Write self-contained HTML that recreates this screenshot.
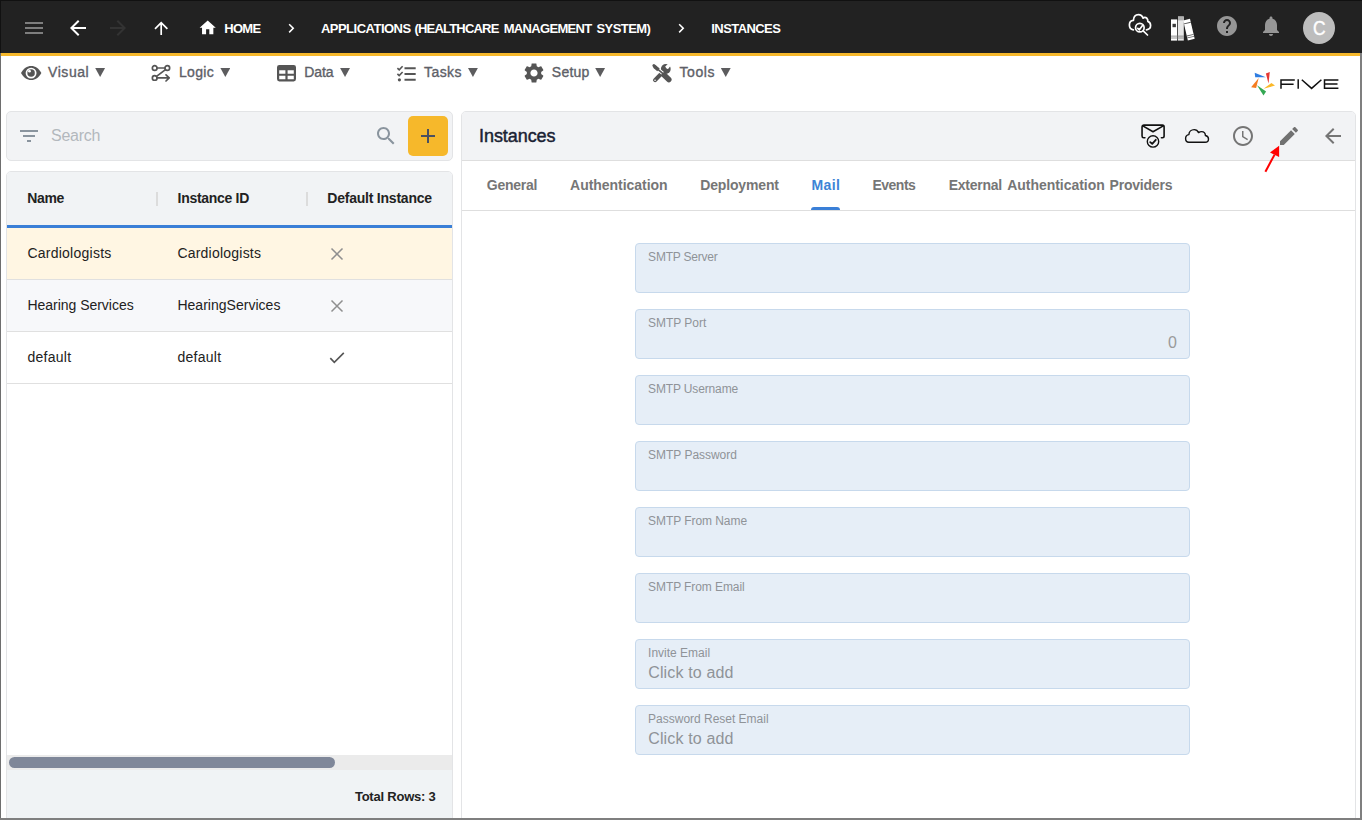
<!DOCTYPE html>
<html lang="en">
<head>
<meta charset="utf-8">
<title>Instances - Five</title>
<style>
html,body{margin:0;padding:0;}
body{width:1362px;height:820px;overflow:hidden;background:#fff;position:relative;font-family:"Liberation Sans",sans-serif;}
.a{position:absolute;box-sizing:border-box;}
.t{position:absolute;white-space:nowrap;line-height:1;font-family:"Liberation Sans",sans-serif;}
svg{position:absolute;overflow:visible;}
.tri{position:absolute;top:68.100px;width:9.900px;height:8.800px;background:#5c5c5e;clip-path:polygon(0 0,100% 0,50% 100%);}
.field{position:absolute;box-sizing:border-box;left:635px;width:555px;height:50px;background:#e6eef7;border:1px solid #c7d9ec;border-radius:4px;}
.sep{position:absolute;width:2px;height:14px;top:192px;background:#dcdcdc;}
.rowline{position:absolute;left:7px;width:445px;height:1px;background:#e0e0e0;}
</style>
</head>
<body>

<!-- ===== top app bar ===== -->
<div class="a" style="left:0;top:0;width:1362px;height:53px;background:#222222;"></div>
<div class="a" style="left:0;top:53px;width:1362px;height:3px;background:#f6b82b;"></div>

<!-- hamburger -->
<svg style="left:22px;top:16px" width="24" height="24" viewBox="0 0 24 24"><path fill="#7e7e7e" d="M3 18h18v-2H3v2zm0-5h18v-2H3v2zm0-7v2h18V6H3z"/></svg>
<!-- back -->
<svg style="left:66px;top:16px" width="24" height="24" viewBox="0 0 24 24"><path fill="#ffffff" d="M20 11H7.83l5.59-5.59L12 4l-8 8 8 8 1.41-1.41L7.83 13H20v-2z"/></svg>
<!-- forward (disabled) -->
<svg style="left:106px;top:16px" width="24" height="24" viewBox="0 0 24 24"><path fill="#333333" d="M12 4l-1.41 1.41L16.17 11H4v2h12.170l-5.580 5.590L12 20l8-8z"/></svg>
<!-- up -->
<svg style="left:150.800px;top:18.100px" width="20.400" height="20.400" viewBox="0 0 24 24"><path fill="#ffffff" d="M4 12l1.410 1.410L11 7.830V20h2V7.830l5.580 5.590L20 12l-8-8-8 8z"/></svg>
<!-- home -->
<svg style="left:198.300px;top:18.200px" width="19.400" height="19.400" viewBox="0 0 24 24"><path fill="#ffffff" d="M10 20v-6h4v6h5v-8h3L12 3 2 12h3v8z"/></svg>
<!-- chevrons -->
<svg style="left:281.600px;top:19.150px" width="18.500" height="18.500" viewBox="0 0 24 24"><path fill="#ffffff" d="M10 6L8.590 7.410 13.170 12l-4.580 4.590L10 18l6-6z"/></svg>
<svg style="left:671.600px;top:19.150px" width="18.500" height="18.500" viewBox="0 0 24 24"><path fill="#ffffff" d="M10 6L8.590 7.410 13.170 12l-4.580 4.590L10 18l6-6z"/></svg>

<!-- cloud search icon -->
<svg style="left:1128px;top:13px" width="26" height="24" viewBox="0 0 26 24" fill="none" stroke="#ffffff" stroke-width="1.700" stroke-linecap="round" stroke-linejoin="round">
<path d="M5.400 16.850C3 16.500 1.400 14.500 1.400 12C1.400 9.300 3.200 7.600 5.400 7.400C5.600 4 7.500 1.700 10.400 1.700C12.600 1.700 14.300 3 15.100 5.200C16 4.200 17.600 4.100 18.600 5C19.600 5.900 20 7.200 19.800 8.400C21.600 9 22.600 10.700 22.600 12.500C22.600 14.800 21 16.500 18.500 16.850"/>
<circle cx="11.850" cy="14.660" r="4.300"/>
<path d="M15.200 17.900l4.300 4.100"/>
<path d="M9.800 15.300l1.550 1.550 3.150-4.250" stroke-width="1.700"/>
</svg>

<!-- books icon -->
<svg style="left:1171px;top:15.500px" width="25" height="25" viewBox="0 0 25 25">
<rect x="0" y="3.400" width="6.200" height="21.200" fill="#ffffff"/>
<rect x="7" y="0.500" width="5.800" height="24.100" fill="#e6e6e6"/>
<rect x="7" y="0.500" width="5.800" height="3.900" fill="#b0b0b0"/>
<g transform="rotate(-13.200 17.900 14)"><rect x="14.500" y="3.400" width="7" height="20.500" fill="#ffffff"/>
<rect x="14.500" y="6.400" width="7" height="1" fill="#555"/><rect x="14.500" y="18.900" width="7" height="0.900" fill="#666"/><rect x="14.500" y="20.900" width="7" height="0.800" fill="#666"/></g>
<rect x="1.500" y="7.800" width="3.400" height="3.400" fill="#3a3a3a"/>
<rect x="0" y="19.700" width="12.800" height="0.800" fill="#777"/>
<rect x="0" y="21.600" width="12.800" height="0.800" fill="#777"/>
</svg>

<!-- help -->
<svg style="left:1215px;top:13.700px" width="24" height="24" viewBox="0 0 24 24"><path fill="#969696" d="M12 2C6.480 2 2 6.480 2 12s4.480 10 10 10 10-4.480 10-10S17.520 2 12 2zm1 17h-2v-2h2v2zm2.070-7.750l-.9.920C13.450 12.900 13 13.500 13 15h-2v-.5c0-1.100.450-2.100 1.170-2.830l1.240-1.260c.370-.360.590-.860.590-1.410 0-1.100-.9-2-2-2s-2 .9-2 2H8c0-2.210 1.790-4 4-4s4 1.790 4 4c0 .880-.360 1.680-.930 2.250z"/></svg>
<!-- bell -->
<svg style="left:1259px;top:13.800px" width="24" height="24" viewBox="0 0 24 24"><path fill="#969696" d="M12 22c1.100 0 2-.9 2-2h-4c0 1.100.890 2 2 2zm6-6v-5c0-3.070-1.640-5.640-4.500-6.320V4c0-.830-.670-1.500-1.500-1.500s-1.500.670-1.500 1.500v.680C7.630 5.360 6 7.920 6 11v5l-2 2v1h16v-1l-2-2z"/></svg>
<!-- avatar -->
<div class="a" style="left:1303px;top:12px;width:32px;height:32px;border-radius:50%;background:#bdbdbd;"></div>

<!-- ===== menu bar icons ===== -->
<!-- eye -->
<svg style="left:20.800px;top:65.900px" width="20.400" height="14" viewBox="0 0 20.400 14"><path fill="#555555" d="M0 7C2.500 2.500 6 0 10.200 0C14.400 0 17.900 2.500 20.400 7C17.900 11.500 14.400 14 10.200 14C6 14 2.500 11.500 0 7Z"/><circle cx="10.100" cy="7.100" r="5.450" fill="#ffffff"/><circle cx="10.100" cy="7.100" r="3.750" fill="#555555"/><circle cx="8.500" cy="5.200" r="1.350" fill="#ffffff"/></svg>
<div class="tri" style="left:95.200px;"></div>

<!-- logic -->
<svg style="left:151px;top:64px" width="20" height="18" viewBox="0 0 20 18" fill="none" stroke="#555555" stroke-width="1.700" stroke-linecap="round" stroke-linejoin="round">
<circle cx="3.700" cy="4" r="2.350"/><circle cx="16.300" cy="4" r="2.350"/><circle cx="3.700" cy="13.900" r="2.350"/>
<path d="M6.100 4h7.800M14.500 5.600L5.500 12.400M6.100 13.900h12M15 10.800l3.200 3.100-3.200 3.100"/>
</svg>
<div class="tri" style="left:220.400px;"></div>

<!-- data -->
<svg style="left:277.400px;top:64.600px" width="19" height="16.400" viewBox="0 0 19 16.400"><path fill="#555555" fill-rule="evenodd" d="M2.300 0h14.400a2.300 2.300 0 0 1 2.300 2.300v11.800a2.300 2.300 0 0 1-2.300 2.300H2.300A2.300 2.300 0 0 1 0 14.100V2.300A2.300 2.300 0 0 1 2.300 0zM2.200 5.300v3.400h6.200V5.300zM10.600 5.300v3.400h6.200V5.300zM2.200 10.800v3.400h6.200v-3.400zM10.600 10.800v3.400h6.200v-3.400z"/></svg>
<div class="tri" style="left:340.100px;"></div>

<!-- tasks -->
<svg style="left:396.750px;top:65.650px" width="20" height="15.400" viewBox="0 0 20 15.400" fill="none" stroke="#555555" stroke-linecap="butt">
<path d="M7.500 2.200h11.200M7.500 7.950h11.200M7.500 13.800h11.200" stroke-width="1.900"/>
<path d="M0.400 2.100l1.800 1.700L5.600 0.300M0.400 7.850l1.800 1.700 3.400-3.500" stroke-width="1.600" stroke-linejoin="miter"/>
<circle cx="2.400" cy="13.800" r="1.600" fill="#555555" stroke="none"/>
</svg>
<div class="tri" style="left:468px;"></div>

<!-- gear -->
<svg style="left:522px;top:61px" width="24" height="24" viewBox="0 0 24 24"><path fill="#555555" d="M19.140 12.940c.040-.3.060-.610.060-.940 0-.320-.020-.640-.070-.940l2.030-1.580c.180-.140.230-.410.120-.610l-1.920-3.320c-.120-.220-.370-.290-.590-.220l-2.390.960c-.5-.380-1.030-.7-1.620-.940l-.360-2.540c-.040-.240-.240-.410-.480-.410h-3.840c-.240 0-.430.170-.470.410l-.360 2.540c-.590.240-1.130.570-1.620.940l-2.390-.960c-.220-.080-.470 0-.590.220L2.740 8.870c-.120.210-.080.470.12.610l2.030 1.580c-.050.3-.090.630-.090.940s.020.640.070.940l-2.030 1.580c-.180.140-.230.410-.120.610l1.920 3.320c.120.220.370.290.590.220l2.390-.960c.5.380 1.030.7 1.620.940l.360 2.540c.050.240.240.410.480.410h3.840c.240 0 .440-.170.470-.410l.360-2.540c.590-.240 1.130-.560 1.620-.940l2.390.960c.220.080.470 0 .590-.220l1.920-3.320c.120-.220.070-.470-.12-.610l-2.010-1.580zM12 15.600c-1.980 0-3.600-1.620-3.600-3.600s1.620-3.600 3.600-3.600 3.600 1.620 3.600 3.600-1.620 3.600-3.600 3.600z"/></svg>
<div class="tri" style="left:595.200px;"></div>

<!-- tools -->
<svg style="left:652px;top:63.500px" width="20" height="19" viewBox="0 0 20 19" fill="none" stroke="#555555" stroke-linecap="round">
<circle cx="13.800" cy="5" r="4.900" fill="#555555" stroke="none"/>
<path d="M14.300 3.900L19 -0.800" stroke="#ffffff" stroke-width="3.400" stroke-linecap="butt"/>
<circle cx="15.600" cy="3.100" r="1.700" fill="#ffffff" stroke="none"/>
<path d="M11.300 7.600L3.100 16.100" stroke-width="4.200"/>
<circle cx="3.050" cy="16.250" r="0.800" fill="#ffffff" stroke="none"/>
<path d="M6 5.400L11 9.600" stroke="#ffffff" stroke-width="3.600" stroke-linecap="butt"/>
<path d="M2.300 2.400L6.500 5.900" stroke-width="3.700" stroke-linecap="butt"/>
<path d="M1.900 1.600l1.600 1.600" stroke-width="3"/>
<path d="M6 5.400L11.200 9.800" stroke-width="1.600" stroke-linecap="butt"/>
<path d="M12.100 11.100L16.800 15.500" stroke-width="5.500"/>
</svg>
<div class="tri" style="left:720.800px;"></div>

<!-- FIVE logo -->
<svg style="left:1240px;top:60px" width="122" height="50" viewBox="0 0 122 50">
<polygon points="14.700,12.800 25.800,17.200 15.200,17.200" fill="#2f7de1"/>
<polygon points="29.800,12 25.900,13.600 28.500,23.600" fill="#e53935"/>
<polygon points="35,25.600 31.400,23 23.600,28.800" fill="#fbb829"/>
<polygon points="23.500,35.500 26.100,31.400 17,25.200" fill="#34a853"/>
<polygon points="11.100,27.300 16.100,27.900 18.700,17.900" fill="#f57c20"/>
<g fill="none" stroke="#111111" stroke-width="1.500" stroke-linecap="butt" stroke-linejoin="miter">
<path d="M41 28.800V19.900h13.800M41 24.200h12.600"/>
<path d="M58.200 19.300v9.500"/>
<path d="M61.800 19.800l9.800 8.600 9.800-8.600"/>
<path d="M98.400 19.900H84.500v8.300h13.900M84.500 24.100h13"/>
</g>
</svg>

<!-- ===== left panel ===== -->
<div class="a" style="left:6px;top:111px;width:447px;height:50px;background:#f2f3f5;border:1px solid #e3e4e6;border-radius:5px;"></div>
<svg style="left:17px;top:124px" width="24" height="24" viewBox="0 0 24 24"><path fill="#8a949e" d="M10 18h4v-2h-4v2zM3 6v2h18V6H3zm3 7h12v-2H6v2z"/></svg>
<svg style="left:374px;top:123.800px" width="24" height="24" viewBox="0 0 24 24"><path fill="#8a949e" d="M15.500 14h-.79l-.28-.27C15.410 12.590 16 11.110 16 9.500 16 5.910 13.090 3 9.500 3S3 5.910 3 9.500 5.910 16 9.500 16c1.610 0 3.090-.59 4.230-1.570l.27.280v.79l5 4.990L20.490 19l-4.990-5zm-6 0C7.010 14 5 11.990 5 9.500S7.010 5 9.500 5 14 7.010 14 9.500 11.990 14 9.500 14z"/></svg>
<div class="a" style="left:408px;top:116px;width:40px;height:40px;background:#f6b82b;border-radius:5px;"></div>
<div class="a" style="left:421px;top:135px;width:14px;height:2px;background:#4a5060;"></div>
<div class="a" style="left:427px;top:129px;width:2px;height:14px;background:#4a5060;"></div>

<!-- table -->
<div class="a" style="left:6px;top:171px;width:447px;height:660px;background:#ffffff;border:1px solid #e3e4e6;border-radius:5px 5px 0 0;"></div>
<div class="a" style="left:7px;top:172px;width:445px;height:53px;background:#f1f3f5;border-radius:4px 4px 0 0;"></div>
<div class="sep" style="left:156px;"></div>
<div class="sep" style="left:306px;"></div>
<div class="a" style="left:7px;top:225px;width:445px;height:3px;background:#3a7fd7;"></div>
<div class="a" style="left:7px;top:228px;width:445px;height:51px;background:#fff6e3;"></div>
<div class="rowline" style="top:279px;"></div>
<div class="a" style="left:7px;top:280px;width:445px;height:51px;background:#f7f8fa;"></div>
<div class="rowline" style="top:331px;"></div>
<div class="rowline" style="top:383px;"></div>
<!-- x / check icons -->
<svg style="left:331.400px;top:248.400px" width="12" height="12" viewBox="0 0 12 12" fill="none" stroke="#8f8f8f" stroke-width="1.500"><path d="M0.500 0.500l11 11M11.500 0.500l-11 11"/></svg>
<svg style="left:331.400px;top:300.400px" width="12" height="12" viewBox="0 0 12 12" fill="none" stroke="#8f8f8f" stroke-width="1.500"><path d="M0.500 0.500l11 11M11.500 0.500l-11 11"/></svg>
<svg style="left:329.200px;top:351px" width="16" height="13" viewBox="0 0 16 13" fill="none" stroke="#555555" stroke-width="1.650"><path d="M1.300 7.200l4 4.100L14.800 1.900"/></svg>
<!-- scrollbar + footer -->
<div class="a" style="left:7px;top:755px;width:445px;height:15px;background:#ebebeb;"></div>
<div class="a" style="left:9px;top:757px;width:326px;height:11px;background:#7f8799;border-radius:6px;"></div>
<div class="a" style="left:7px;top:770px;width:445px;height:48px;background:#f0f3f5;"></div>

<!-- ===== right panel ===== -->
<div class="a" style="left:461px;top:111px;width:895px;height:720px;background:#ffffff;border:1px solid #e3e4e6;border-radius:5px 5px 0 0;"></div>
<div class="a" style="left:462px;top:112px;width:893px;height:48px;background:#f2f3f5;border-radius:4px 4px 0 0;"></div>
<div class="a" style="left:462px;top:160px;width:893px;height:1px;background:#dedede;"></div>
<div class="a" style="left:462px;top:210px;width:893px;height:1px;background:#dedede;"></div>
<div class="a" style="left:811px;top:207px;width:29px;height:3px;background:#3a7fd7;border-radius:3px 3px 0 0;"></div>

<!-- mail-check -->
<svg style="left:1140px;top:123px" width="26" height="26" viewBox="0 0 26 26" fill="none" stroke="#111111" stroke-width="1.600" stroke-linecap="round" stroke-linejoin="round">
<path d="M4.900 14.700H3.700C2.700 14.700 2.050 14 2.050 13V3.800C2.050 2.800 2.700 2.100 3.700 2.100h18.700c1 0 1.700.7 1.700 1.700V13c0 1-.7 1.700-1.700 1.700H21.400"/>
<path d="M2.800 2.900L13 8.700 23.300 2.900"/>
<circle cx="13" cy="18.450" r="5.700" stroke-width="1.400"/>
<path d="M10.200 19.100l2 1.700 3.600-4" stroke-width="1.800"/>
</svg>
<!-- cloud -->
<svg style="left:1184px;top:127px" width="26" height="18" viewBox="0 0 26 18" fill="none" stroke="#111111" stroke-width="1.400" stroke-linejoin="round"><path d="M4.800 15.300C2.900 15.300 1.600 13.600 1.600 11.600C1.600 9.400 3 7.900 4.900 7.600C5 4.800 7.300 2.600 10.200 2.600C12.200 2.600 13.800 3.800 14.600 5.600C15.400 4.900 16.500 4.600 17.600 4.600C19.800 4.600 21.300 6.300 21.400 8.500C23.200 8.900 24.500 10.200 24.500 12C24.500 13.900 23 15.300 21.100 15.300Z"/></svg>
<!-- clock -->
<svg style="left:1231px;top:123.800px" width="24" height="24" viewBox="0 0 24 24"><path fill="#757575" d="M11.990 2C6.470 2 2 6.480 2 12s4.470 10 9.990 10C17.520 22 22 17.520 22 12S17.520 2 11.990 2zM12 20c-4.420 0-8-3.580-8-8s3.580-8 8-8 8 3.580 8 8-3.580 8-8 8zm.5-13H11v6l5.250 3.150.75-1.230-4.500-2.670z"/></svg>
<!-- pencil -->
<svg style="left:1277px;top:124px" width="24" height="24" viewBox="0 0 24 24"><path fill="#717171" d="M3 17.250V21h3.750L17.810 9.940l-3.750-3.750L3 17.250zM20.710 7.040c.39-.39.39-1.020 0-1.410l-2.340-2.340c-.39-.39-1.020-.39-1.410 0l-1.830 1.830 3.750 3.750 1.830-1.830z"/></svg>
<!-- back arrow -->
<svg style="left:1321px;top:124.200px" width="24" height="24" viewBox="0 0 24 24"><path fill="#757575" d="M20 11H7.830l5.590-5.590L12 4l-8 8 8 8 1.410-1.410L7.830 13H20v-2z"/></svg>
<!-- red annotation arrow -->
<svg style="left:1260px;top:142px" width="24" height="32" viewBox="0 0 24 32"><path d="M5.400 29.800L14.600 12.600" stroke="#ff0000" stroke-width="2" fill="none"/><polygon points="19.100,3.800 10,10.600 19.100,15" fill="#ff0000"/></svg>

<!-- fields -->
<div class="field" style="top:243px;"></div>
<div class="field" style="top:309px;"></div>
<div class="field" style="top:375px;"></div>
<div class="field" style="top:441px;"></div>
<div class="field" style="top:507px;"></div>
<div class="field" style="top:573px;"></div>
<div class="field" style="top:639px;"></div>
<div class="field" style="top:705px;"></div>

<!-- text -->
<span class="t" style="left:224.20px;top:22.00px;font-size:13px;font-weight:700;color:#fff;letter-spacing:-0.667px;">HOME</span>
<span class="t" style="left:320.90px;top:22.00px;font-size:13px;font-weight:700;color:#fff;letter-spacing:-0.503px;">APPLICATIONS</span>
<span class="t" style="left:414.50px;top:22.00px;font-size:13px;font-weight:700;color:#fff;letter-spacing:-0.812px;">(HEALTHCARE</span>
<span class="t" style="left:503.70px;top:22.00px;font-size:13px;font-weight:700;color:#fff;letter-spacing:-0.668px;">MANAGEMENT</span>
<span class="t" style="left:596.40px;top:22.00px;font-size:13px;font-weight:700;color:#fff;letter-spacing:-0.549px;">SYSTEM)</span>
<span class="t" style="left:711.30px;top:22.00px;font-size:13px;font-weight:700;color:#fff;letter-spacing:-0.570px;">INSTANCES</span>
<span class="t" style="left:48.10px;top:65.15px;font-size:14px;font-weight:400;color:#5d6067;letter-spacing:0.542px;-webkit-text-stroke:0.35px #5d6067;">Visual</span>
<span class="t" style="left:179.00px;top:65.15px;font-size:14px;font-weight:400;color:#5d6067;letter-spacing:0.333px;-webkit-text-stroke:0.35px #5d6067;">Logic</span>
<span class="t" style="left:304.30px;top:65.15px;font-size:14px;font-weight:400;color:#5d6067;letter-spacing:-0.126px;-webkit-text-stroke:0.35px #5d6067;">Data</span>
<span class="t" style="left:424.00px;top:65.15px;font-size:14px;font-weight:400;color:#5d6067;letter-spacing:0.426px;-webkit-text-stroke:0.35px #5d6067;">Tasks</span>
<span class="t" style="left:551.80px;top:65.15px;font-size:14px;font-weight:400;color:#5d6067;letter-spacing:0.252px;-webkit-text-stroke:0.35px #5d6067;">Setup</span>
<span class="t" style="left:679.50px;top:65.15px;font-size:14px;font-weight:400;color:#5d6067;letter-spacing:0.553px;-webkit-text-stroke:0.35px #5d6067;">Tools</span>
<span class="t" style="left:51.10px;top:128.36px;font-size:16px;font-weight:400;color:#b3b8bd;letter-spacing:-0.281px;">Search</span>
<span class="t" style="left:27.30px;top:190.85px;font-size:14px;font-weight:700;color:#222;letter-spacing:-0.380px;">Name</span>
<span class="t" style="left:177.60px;top:190.85px;font-size:14px;font-weight:700;color:#222;letter-spacing:-0.300px;">Instance ID</span>
<span class="t" style="left:327.30px;top:190.85px;font-size:14px;font-weight:700;color:#222;letter-spacing:-0.223px;">Default Instance</span>
<span class="t" style="left:27.40px;top:246.35px;font-size:14px;font-weight:400;color:#222;letter-spacing:0.247px;">Cardiologists</span>
<span class="t" style="left:177.40px;top:246.35px;font-size:14px;font-weight:400;color:#222;letter-spacing:0.222px;">Cardiologists</span>
<span class="t" style="left:27.40px;top:298.15px;font-size:14px;font-weight:400;color:#222;letter-spacing:-0.021px;">Hearing Services</span>
<span class="t" style="left:177.40px;top:298.15px;font-size:14px;font-weight:400;color:#222;letter-spacing:0.020px;">HearingServices</span>
<span class="t" style="left:27.40px;top:349.95px;font-size:14px;font-weight:400;color:#222;letter-spacing:0.276px;">default</span>
<span class="t" style="left:177.40px;top:349.95px;font-size:14px;font-weight:400;color:#222;letter-spacing:0.276px;">default</span>
<span class="t" style="left:354.90px;top:789.90px;font-size:13px;font-weight:700;color:#222;letter-spacing:-0.221px;">Total Rows: 3</span>
<span class="t" style="left:479.00px;top:126.76px;font-size:18px;font-weight:400;color:#1a2233;letter-spacing:-0.068px;-webkit-text-stroke:0.45px #1a2233;">Instances</span>
<span class="t" style="left:486.80px;top:178.35px;font-size:14px;font-weight:700;color:#767676;letter-spacing:-0.240px;">General</span>
<span class="t" style="left:570.10px;top:178.35px;font-size:14px;font-weight:700;color:#767676;letter-spacing:-0.038px;">Authentication</span>
<span class="t" style="left:700.20px;top:178.35px;font-size:14px;font-weight:700;color:#767676;letter-spacing:-0.147px;">Deployment</span>
<span class="t" style="left:811.60px;top:178.35px;font-size:14px;font-weight:700;color:#3d84d6;letter-spacing:0.322px;">Mail</span>
<span class="t" style="left:872.40px;top:178.35px;font-size:14px;font-weight:700;color:#767676;letter-spacing:-0.484px;">Events</span>
<span class="t" style="left:948.70px;top:178.35px;font-size:14px;font-weight:700;color:#767676;letter-spacing:-0.250px;">External</span>
<span class="t" style="left:1007.30px;top:178.35px;font-size:14px;font-weight:700;color:#767676;letter-spacing:-0.046px;">Authentication</span>
<span class="t" style="left:1109.50px;top:178.35px;font-size:14px;font-weight:700;color:#767676;letter-spacing:-0.199px;">Providers</span>
<span class="t" style="left:648.10px;top:250.64px;font-size:12px;font-weight:400;color:#8f9398;letter-spacing:-0.210px;">SMTP Server</span>
<span class="t" style="left:648.10px;top:316.64px;font-size:12px;font-weight:400;color:#8f9398;letter-spacing:-0.034px;">SMTP Port</span>
<span class="t" style="left:648.10px;top:382.64px;font-size:12px;font-weight:400;color:#8f9398;letter-spacing:-0.143px;">SMTP Username</span>
<span class="t" style="left:648.10px;top:448.64px;font-size:12px;font-weight:400;color:#8f9398;letter-spacing:-0.028px;">SMTP Password</span>
<span class="t" style="left:648.10px;top:514.64px;font-size:12px;font-weight:400;color:#8f9398;letter-spacing:-0.061px;">SMTP From Name</span>
<span class="t" style="left:648.10px;top:580.64px;font-size:12px;font-weight:400;color:#8f9398;letter-spacing:-0.085px;">SMTP From Email</span>
<span class="t" style="left:648.10px;top:646.64px;font-size:12px;font-weight:400;color:#8f9398;letter-spacing:-0.003px;">Invite Email</span>
<span class="t" style="left:648.10px;top:712.64px;font-size:12px;font-weight:400;color:#8f9398;letter-spacing:-0.012px;">Password Reset Email</span>
<span class="t" style="left:1167.90px;top:335.06px;font-size:16px;font-weight:400;color:#9a9a9a;letter-spacing:0.000px;">0</span>
<span class="t" style="left:648.20px;top:664.76px;font-size:16px;font-weight:400;color:#8f9398;letter-spacing:0.155px;">Click to add</span>
<span class="t" style="left:648.20px;top:730.76px;font-size:16px;font-weight:400;color:#8f9398;letter-spacing:0.155px;">Click to add</span>
<span class="t" style="left:1311.80px;top:18.27px;font-size:20px;font-weight:400;color:#fff;letter-spacing:0.000px;-webkit-text-stroke:0.4px #fff;transform:scaleX(0.87);transform-origin:50% 50%;">C</span>

<!-- window frame edges -->
<div class="a" style="left:0;top:0;width:1362px;height:1px;background:#111111;"></div>
<div class="a" style="left:0;top:0;width:1px;height:820px;background:#6e6e6e;"></div>
<div class="a" style="left:0;top:0;width:1px;height:53px;background:#111111;"></div>
<div class="a" style="left:1360px;top:53px;width:2px;height:767px;background:#7f7f7f;"></div>
<div class="a" style="left:0;top:818px;width:1362px;height:2px;background:#7f7f7f;"></div>
</body>
</html>
